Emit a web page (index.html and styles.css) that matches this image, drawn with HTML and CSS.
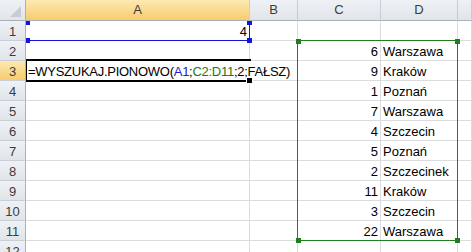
FILE: index.html
```html
<!DOCTYPE html>
<html lang="pl">
<head>
<meta charset="utf-8">
<title>Arkusz1</title>
<link rel="stylesheet" href="styles.css">
</head>
<body>
<div class="sheet">
  <div class="corner"></div>
  <div class="colhead sel">A</div>
  <div class="colhead">B</div>
  <div class="colhead">C</div>
  <div class="colhead">D</div>
  <div class="colhead"></div>

  <div class="rowhead">1</div>
  <div class="cell num">4</div>
  <div class="cell"></div><div class="cell"></div><div class="cell"></div><div class="cell"></div>

  <div class="rowhead">2</div>
  <div class="cell"></div><div class="cell"></div>
  <div class="cell num">6</div><div class="cell">Warszawa</div><div class="cell"></div>

  <div class="rowhead sel">3</div>
  <div class="cell edit">=WYSZUKAJ.PIONOWO(<span class="ref-a">A1</span>;<span class="ref-c">C2:D11</span>;2;FAŁSZ)</div>
  <div class="cell"></div>
  <div class="cell num">9</div><div class="cell">Kraków</div><div class="cell"></div>

  <div class="rowhead">4</div>
  <div class="cell"></div><div class="cell"></div>
  <div class="cell num">1</div><div class="cell">Poznań</div><div class="cell"></div>

  <div class="rowhead">5</div>
  <div class="cell"></div><div class="cell"></div>
  <div class="cell num">7</div><div class="cell">Warszawa</div><div class="cell"></div>

  <div class="rowhead">6</div>
  <div class="cell"></div><div class="cell"></div>
  <div class="cell num">4</div><div class="cell">Szczecin</div><div class="cell"></div>

  <div class="rowhead">7</div>
  <div class="cell"></div><div class="cell"></div>
  <div class="cell num">5</div><div class="cell">Poznań</div><div class="cell"></div>

  <div class="rowhead">8</div>
  <div class="cell"></div><div class="cell"></div>
  <div class="cell num">2</div><div class="cell">Szczecinek</div><div class="cell"></div>

  <div class="rowhead">9</div>
  <div class="cell"></div><div class="cell"></div>
  <div class="cell num">11</div><div class="cell">Kraków</div><div class="cell"></div>

  <div class="rowhead">10</div>
  <div class="cell"></div><div class="cell"></div>
  <div class="cell num">3</div><div class="cell">Szczecin</div><div class="cell"></div>

  <div class="rowhead">11</div>
  <div class="cell"></div><div class="cell"></div>
  <div class="cell num">22</div><div class="cell">Warszawa</div><div class="cell"></div>

  <div class="rowhead">12</div>
  <div class="cell"></div><div class="cell"></div><div class="cell"></div><div class="cell"></div><div class="cell"></div>

  <!-- range highlights drawn over the grid -->
  <div class="range range-a">
    <span class="h tl"></span><span class="h tr"></span><span class="h bl"></span><span class="h br"></span>
  </div>
  <div class="range range-c">
    <span class="h tl"></span><span class="h tr"></span><span class="h bl"></span><span class="h br"></span>
  </div>
  <div class="active"><span class="fill"></span></div>
</div>
</body>
</html>
```
FILE: styles.css
```css
html, body {
  margin: 0;
  padding: 0;
  background: #fff;
  overflow: hidden;
}

.sheet {
  position: relative;
  display: grid;
  grid-template-columns: 26px 224px 48px 83px 77px 1fr;
  grid-template-rows: 21px repeat(12, 20px);
  width: 472px;
  height: 252px;
  overflow: hidden;
  font-family: "Liberation Sans", Arial, sans-serif;
  font-size: 13px;
  color: #000;
}

.sheet > div {
  box-sizing: border-box;
}

/* headers */
.corner,
.colhead,
.rowhead {
  position: relative;
  z-index: 3;
  background: linear-gradient(#eef1f5, #e1e5ea);
  color: #3c3c3c;
  text-align: center;
}

.corner {
  border-right: 1px solid #a9b0b9;
  border-bottom: 1px solid #a9b0b9;
}

.corner::after {
  content: "";
  position: absolute;
  right: 4px;
  bottom: 3px;
  width: 11px;
  height: 11px;
  background: #c7ccd2;
  clip-path: polygon(100% 0, 100% 100%, 0 100%);
}

.colhead {
  border-right: 1px solid #c9ced4;
  border-bottom: 1px solid #a9b0b9;
  line-height: 20px;
}

.rowhead {
  border-right: 1px solid #a9b0b9;
  border-bottom: 1px solid #c9ced4;
  line-height: 19px;
  padding-top: 1px;
}

.colhead.sel,
.rowhead.sel {
  background: linear-gradient(#fde9b2, #f7cc6e);
}

/* cells */
.cell {
  border-right: 1px solid #dadcdd;
  border-bottom: 1px solid #dadcdd;
  padding: 1px 2px 0 2px;
  line-height: 19px;
  white-space: nowrap;
  overflow: hidden;
}

.num {
  text-align: right;
}

.edit {
  position: relative;
  z-index: 1;
  overflow: visible;
  border-right-color: transparent;
  padding-left: 2px;
  letter-spacing: -0.27px;
}

.ref-a {
  color: #2020c8;
}

.ref-c {
  color: #1b7a1b;
}

/* reference outlines */
.range {
  position: absolute;
  z-index: 2;
  box-sizing: border-box;
}

.range-a {
  left: 25px;
  top: 20px;
  width: 225px;
  height: 21px;
  border: 1px solid #1414d6;
}

.range-c {
  left: 297px;
  top: 40px;
  width: 161px;
  height: 201px;
  border: 1px solid #1f7f1f;
}

.h {
  position: absolute;
  width: 5px;
  height: 5px;
}

.range-a .h { background: #1414d6; }
.range-c .h { background: #1f7f1f; }

.h.tl { left: -2px; top: -2px; }
.h.tr { right: -3px; top: -2px; }
.h.bl { left: -2px; bottom: -3px; }
.h.br { right: -3px; bottom: -3px; }

.range-a .h.tl { left: -1px; top: -1px; }
.range-a .h.tr { top: -1px; }
.range-a .h.bl { left: -1px; }

.active {
  position: absolute;
  z-index: 2;
  left: 25px;
  top: 59px;
  width: 226px;
  height: 23px;
  box-sizing: border-box;
  border: 2px solid #000;
  border-right: none;
}

.fill {
  position: absolute;
  right: -2px;
  bottom: -4px;
  width: 5px;
  height: 5px;
  background: #000;
  border: 1px solid #fff;
}
```
